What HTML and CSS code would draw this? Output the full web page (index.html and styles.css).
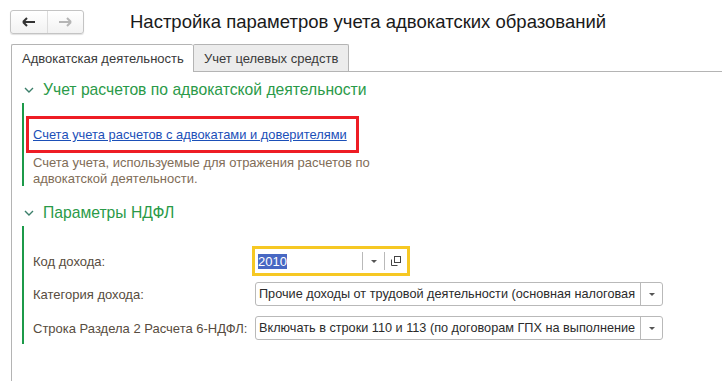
FILE: index.html
```html
<!DOCTYPE html>
<html lang="ru">
  <head>
    <meta charset="UTF-8" />
    <title>Настройка параметров учета адвокатских образований</title>
    <link rel="stylesheet" href="styles.css">
  </head>
  <body>
    <!-- шапка формы -->
    <div class="header">
      <div class="nav">
        <button class="nav-btn">
          <svg width="14" height="10" viewBox="0 0 14 10"><path d="M1 5h12M1 5l4-4M1 5l4 4" stroke="#333" stroke-width="2" fill="none"/></svg>
        </button>
        <button class="nav-btn">
          <svg width="14" height="10" viewBox="0 0 14 10"><path d="M1 5h12M13 5l-4-4M13 5l-4 4" stroke="#b5b5b5" stroke-width="2" fill="none"/></svg>
        </button>
      </div>
      <div class="title">Настройка параметров учета адвокатских образований</div>
    </div>

    <!-- вкладки -->
    <div class="tabs">
      <div class="tab active">Адвокатская деятельность</div>
      <div class="tab">Учет целевых средств</div>
    </div>

    <div class="panel">
      <div class="group-title">
        <svg class="chevron" width="10" height="7" viewBox="0 0 10 7"><path d="M1 1l4 4 4-4" stroke="#3c7f6a" stroke-width="1.4" fill="none"/></svg>
        Учет расчетов по адвокатской деятельности
      </div>
      <div class="group group-accounts">
        <div class="highlight">
          <a href="#" class="link">Счета учета расчетов с адвокатами и доверителями</a>
        </div>
        <div class="note">Счета учета, используемые для отражения расчетов по<br>адвокатской деятельности.</div>
      </div>

      <div class="group-title">
        <svg class="chevron" width="10" height="7" viewBox="0 0 10 7"><path d="M1 1l4 4 4-4" stroke="#3c7f6a" stroke-width="1.4" fill="none"/></svg>
        Параметры НДФЛ
      </div>
      <div class="group group-ndfl">
        <div class="row">
          <div class="label">Код дохода:</div>
          <div class="field field-code focused">
            <div class="value"><span class="selected">2010</span></div>
            <div class="btn"><span class="arrow"></span></div>
            <div class="btn">
              <svg width="10" height="10" viewBox="0 0 10 10"><rect x="3.5" y="0.5" width="6" height="6" fill="none" stroke="#444"/><path d="M0.5 3.5v6h6" fill="none" stroke="#444"/></svg>
            </div>
          </div>
        </div>
        <div class="row">
          <div class="label">Категория дохода:</div>
          <div class="field field-wide">
            <div class="value">Прочие доходы от трудовой деятельности (основная налоговая</div>
            <div class="btn"><span class="arrow"></span></div>
          </div>
        </div>
        <div class="row">
          <div class="label">Строка Раздела 2 Расчета 6-НДФЛ:</div>
          <div class="field field-wide">
            <div class="value">Включать в строки 110 и 113 (по договорам ГПХ на выполнение</div>
            <div class="btn"><span class="arrow"></span></div>
          </div>
        </div>
      </div>
    </div>
  </body>
</html>
```

FILE: styles.css
```css
body {
  margin: 0;
  font-family: "Liberation Sans", Arial, sans-serif;
  font-size: 13px;
  color: #333;
  background: #fff;
}

/* шапка */
.header {
  display: flex;
  align-items: center;
  padding: 10px 0 0 10px;
  height: 24px;
}

.nav {
  display: flex;
  width: 74px;
  height: 24px;
  box-sizing: border-box;
  border: 1px solid #c4c4c4;
  border-radius: 3px;
  background: linear-gradient(#ffffff, #f2f2f2);
  box-shadow: 0 1px 1px rgba(0, 0, 0, 0.12);
}

.nav-btn {
  flex: 1;
  border: none;
  background: transparent;
  padding: 0;
  display: flex;
  align-items: center;
  justify-content: center;
}

.nav-btn + .nav-btn {
  border-left: 1px solid #dcdcdc;
}

.title {
  margin-left: 46px;
  font-size: 18.5px;
  color: #1a1a1a;
}

/* вкладки */
.tabs {
  display: flex;
  margin: 10px 0 0 11px;
  height: 27px;
  border-bottom: 1px solid #b4b4b4;
}

.tab {
  box-sizing: border-box;
  height: 27px;
  padding: 6px 0 0 10px;
  border: 1px solid #b4b4b4;
  border-bottom: none;
  border-radius: 2px 2px 0 0;
  background: #ececec;
  color: #3a3a3a;
  white-space: nowrap;
}

.tab.active {
  background: #fff;
  width: 182px;
  height: 28px;
  border-right: none;
}

.tab:not(.active) {
  width: 156px;
}

/* панель */
.panel {
  margin-left: 11px;
  border-left: 1px solid #b4b4b4;
  min-height: 310px;
  padding-top: 8px;
}

.group-title {
  display: flex;
  align-items: center;
  height: 20px;
  padding-left: 12px;
  font-size: 15.7px;
  color: #2a9a48;
}

.chevron {
  margin-right: 9px;
}

.group {
  margin: 3px 0 0 10px;
  border-left: 2px solid #1c9a49;
  padding-left: 9px;
}

.group-accounts {
  height: 83px;
  padding-top: 13px;
  box-sizing: border-box;
  margin-bottom: 17px;
}

.highlight {
  display: inline-block;
  margin-left: -7px;
  padding: 8px 9px 8px 4px;
  border: 3px solid #ee1c24;
}

.link {
  color: #1b4fb8;
  text-decoration: underline;
  font-size: 12.9px;
}

.note {
  margin-top: 2px;
  color: #7f6d57;
  line-height: 16px;
}

.group-ndfl {
  padding-top: 23px;
  height: 118px;
  box-sizing: border-box;
}

.row {
  display: flex;
  align-items: center;
  height: 24px;
  margin-bottom: 10px;
}

.row:first-child {
  margin-bottom: 9px;
}

.label {
  width: 222px;
  color: #574c40;
}

.field {
  display: flex;
  box-sizing: border-box;
  height: 24px;
  border: 1px solid #b9b9b9;
  border-radius: 3px;
  background: #fff;
  overflow: hidden;
}

.field.focused {
  box-shadow: 0 0 0 3px #f6c823;
  border-color: #fff;
  border-radius: 0;
}

.field-code {
  width: 152px;
}

.field-wide {
  width: 408px;
}

.value {
  flex: 1;
  min-width: 0;
  padding: 4px 3px 0;
  white-space: nowrap;
  overflow: hidden;
  color: #2b2b2b;
}

.field-wide .value {
  font-size: 12.7px;
}

.field-code .value {
  padding-left: 2px;
}

.selected {
  background: #4868c3;
  color: #fff;
}

.btn {
  width: 21px;
  flex-shrink: 0;
  display: flex;
  align-items: center;
  justify-content: center;
  border-left: 1px solid #b9b9b9;
  margin: 2px 0;
}

.field-wide .btn {
  margin: 0;
}

.arrow {
  width: 0;
  height: 0;
  border-left: 3px solid transparent;
  border-right: 3px solid transparent;
  border-top: 3px solid #555;
}
```
